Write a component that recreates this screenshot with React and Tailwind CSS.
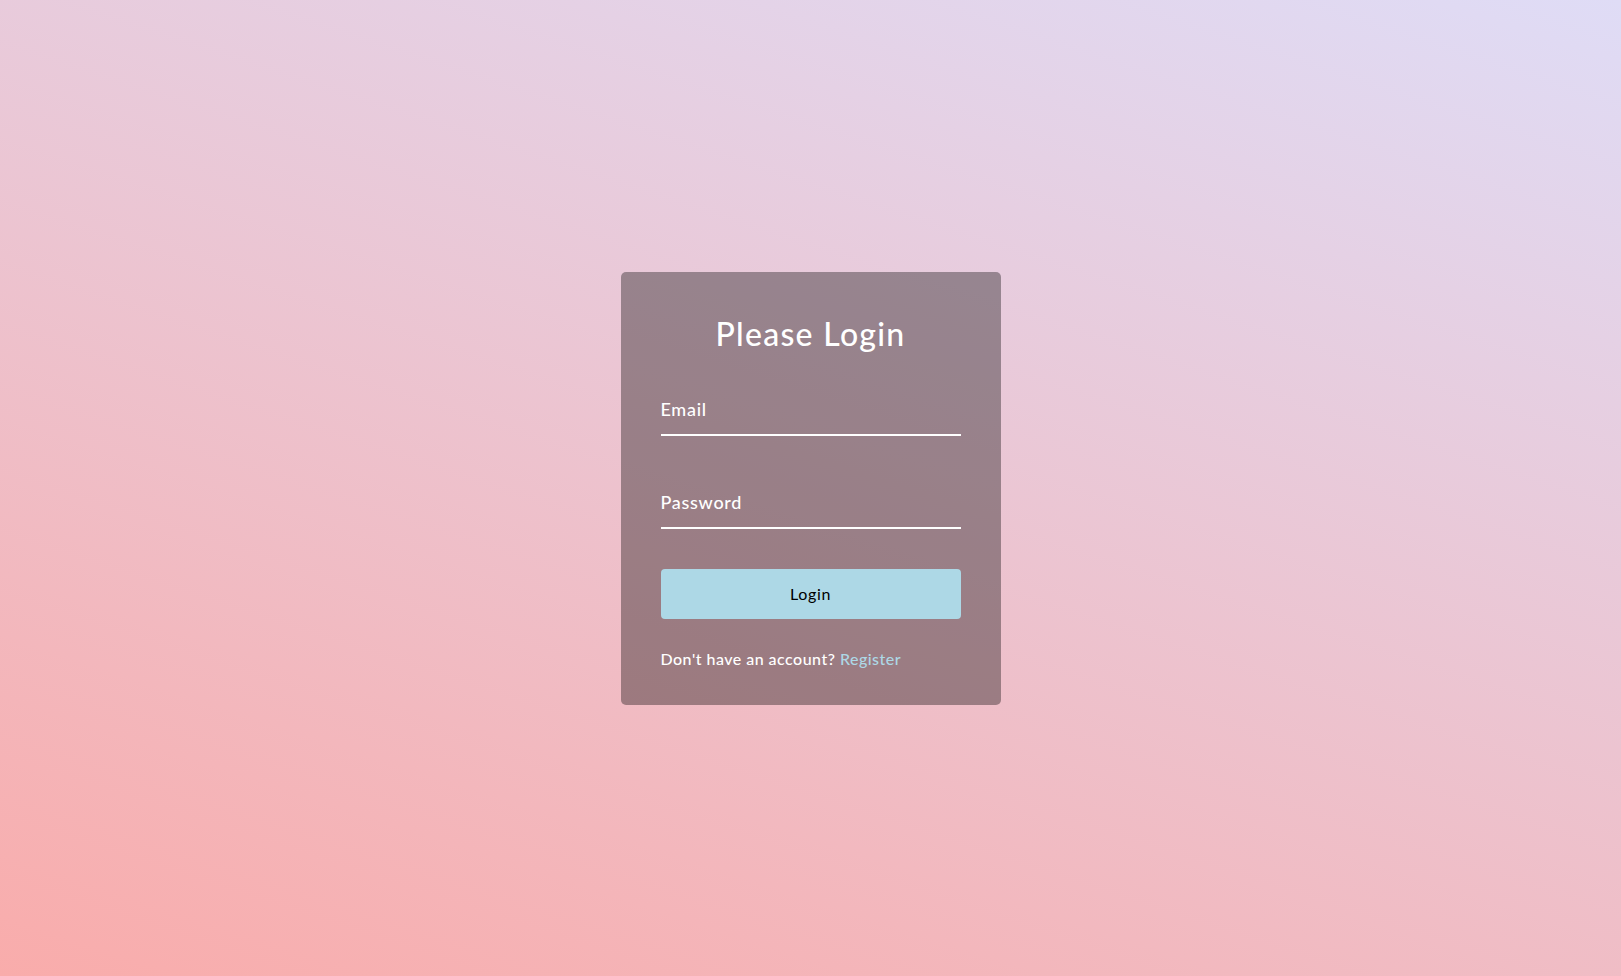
import React from "react";

export default function App() {
  return (
    <div
      className="w-full h-[976px] flex items-center justify-center bg-[linear-gradient(18deg,#f9acab,#dfdcf6)]"
      style={{ fontFamily: "Lato, 'Open Sans', sans-serif" }}
    >
      <div className="w-[380px] bg-black/35 rounded-[5px] pt-[42px] px-10 pb-[34px] flex flex-col">
        <h1 className="h-10 leading-10 text-[32px] text-white text-center font-medium tracking-[0.04em]">
          Please Login
        </h1>
        <input
          type="email"
          placeholder="Email"
          className="mt-[31px] h-[51px] w-full bg-transparent border-0 border-b-2 border-white text-white text-[18px] font-medium tracking-[0.04em] placeholder:text-white outline-none p-0"
        />
        <input
          type="password"
          placeholder="Password"
          className="mt-[42px] h-[51px] w-full bg-transparent border-0 border-b-2 border-white text-white text-[18px] font-medium tracking-[0.04em] placeholder:text-white outline-none p-0"
        />
        <button className="mt-10 h-[50px] w-full rounded-[4px] bg-[#add8e6] text-black text-[16px] font-normal tracking-[0.04em]">
          Login
        </button>
        <p className="mt-[28px] leading-6 text-[16px] text-white font-medium tracking-[0.03em]">
          Don't have an account?{" "}
          <a href="#" className="text-[#add8e6]">
            Register
          </a>
        </p>
      </div>
    </div>
  );
}
